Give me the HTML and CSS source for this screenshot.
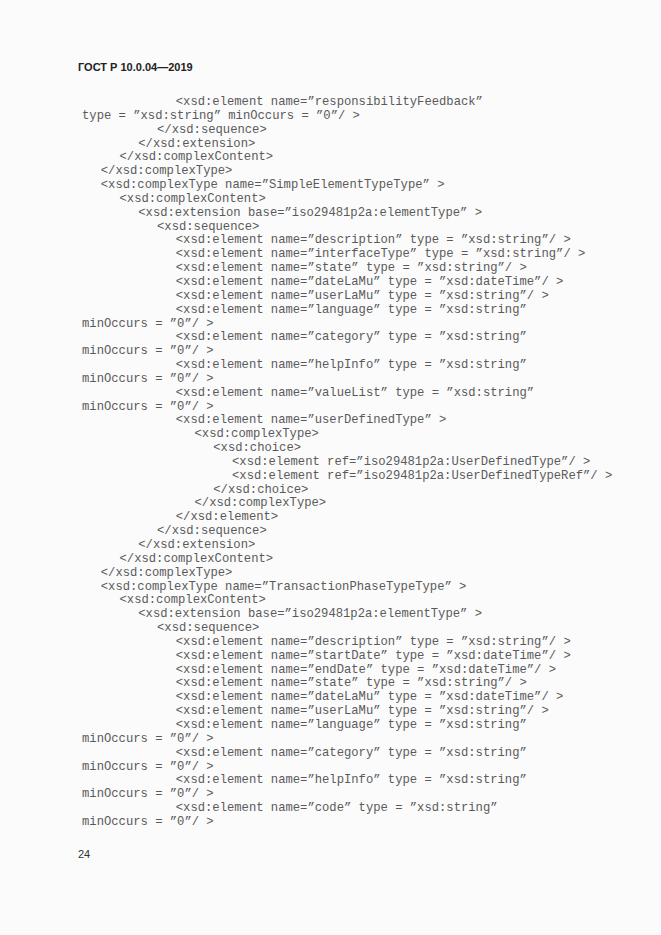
FILE: index.html
```html
<!DOCTYPE html>
<html lang="ru">
<head>
<meta charset="utf-8">
<title>ГОСТ Р 10.0.04—2019</title>
<link rel="stylesheet" href="styles.css">
</head>
<body>
<div class="page">
  <header class="running-head">ГОСТ Р 10.0.04—2019</header>
  <div class="code">
    <div class="ln l5">&lt;xsd:element name=”responsibilityFeedback”</div>
    <div class="ln l0">type = ”xsd:string” minOccurs = ”0”/ &gt;</div>
    <div class="ln l4">&lt;/xsd:sequence&gt;</div>
    <div class="ln l3">&lt;/xsd:extension&gt;</div>
    <div class="ln l2">&lt;/xsd:complexContent&gt;</div>
    <div class="ln l1">&lt;/xsd:complexType&gt;</div>
    <div class="ln l1">&lt;xsd:complexType name=”SimpleElementTypeType” &gt;</div>
    <div class="ln l2">&lt;xsd:complexContent&gt;</div>
    <div class="ln l3">&lt;xsd:extension base=”iso29481p2a:elementType” &gt;</div>
    <div class="ln l4">&lt;xsd:sequence&gt;</div>
    <div class="ln l5">&lt;xsd:element name=”description” type = ”xsd:string”/ &gt;</div>
    <div class="ln l5">&lt;xsd:element name=”interfaceType” type = ”xsd:string”/ &gt;</div>
    <div class="ln l5">&lt;xsd:element name=”state” type = ”xsd:string”/ &gt;</div>
    <div class="ln l5">&lt;xsd:element name=”dateLaMu” type = ”xsd:dateTime”/ &gt;</div>
    <div class="ln l5">&lt;xsd:element name=”userLaMu” type = ”xsd:string”/ &gt;</div>
    <div class="ln l5">&lt;xsd:element name=”language” type = ”xsd:string”</div>
    <div class="ln l0">minOccurs = ”0”/ &gt;</div>
    <div class="ln l5">&lt;xsd:element name=”category” type = ”xsd:string”</div>
    <div class="ln l0">minOccurs = ”0”/ &gt;</div>
    <div class="ln l5">&lt;xsd:element name=”helpInfo” type = ”xsd:string”</div>
    <div class="ln l0">minOccurs = ”0”/ &gt;</div>
    <div class="ln l5">&lt;xsd:element name=”valueList” type = ”xsd:string”</div>
    <div class="ln l0">minOccurs = ”0”/ &gt;</div>
    <div class="ln l5">&lt;xsd:element name=”userDefinedType” &gt;</div>
    <div class="ln l6">&lt;xsd:complexType&gt;</div>
    <div class="ln l7">&lt;xsd:choice&gt;</div>
    <div class="ln l8">&lt;xsd:element ref=”iso29481p2a:UserDefinedType”/ &gt;</div>
    <div class="ln l8">&lt;xsd:element ref=”iso29481p2a:UserDefinedTypeRef”/ &gt;</div>
    <div class="ln l7">&lt;/xsd:choice&gt;</div>
    <div class="ln l6">&lt;/xsd:complexType&gt;</div>
    <div class="ln l5">&lt;/xsd:element&gt;</div>
    <div class="ln l4">&lt;/xsd:sequence&gt;</div>
    <div class="ln l3">&lt;/xsd:extension&gt;</div>
    <div class="ln l2">&lt;/xsd:complexContent&gt;</div>
    <div class="ln l1">&lt;/xsd:complexType&gt;</div>
    <div class="ln l1">&lt;xsd:complexType name=”TransactionPhaseTypeType” &gt;</div>
    <div class="ln l2">&lt;xsd:complexContent&gt;</div>
    <div class="ln l3">&lt;xsd:extension base=”iso29481p2a:elementType” &gt;</div>
    <div class="ln l4">&lt;xsd:sequence&gt;</div>
    <div class="ln l5">&lt;xsd:element name=”description” type = ”xsd:string”/ &gt;</div>
    <div class="ln l5">&lt;xsd:element name=”startDate” type = ”xsd:dateTime”/ &gt;</div>
    <div class="ln l5">&lt;xsd:element name=”endDate” type = ”xsd:dateTime”/ &gt;</div>
    <div class="ln l5">&lt;xsd:element name=”state” type = ”xsd:string”/ &gt;</div>
    <div class="ln l5">&lt;xsd:element name=”dateLaMu” type = ”xsd:dateTime”/ &gt;</div>
    <div class="ln l5">&lt;xsd:element name=”userLaMu” type = ”xsd:string”/ &gt;</div>
    <div class="ln l5">&lt;xsd:element name=”language” type = ”xsd:string”</div>
    <div class="ln l0">minOccurs = ”0”/ &gt;</div>
    <div class="ln l5">&lt;xsd:element name=”category” type = ”xsd:string”</div>
    <div class="ln l0">minOccurs = ”0”/ &gt;</div>
    <div class="ln l5">&lt;xsd:element name=”helpInfo” type = ”xsd:string”</div>
    <div class="ln l0">minOccurs = ”0”/ &gt;</div>
    <div class="ln l5">&lt;xsd:element name=”code” type = ”xsd:string”</div>
    <div class="ln l0">minOccurs = ”0”/ &gt;</div>
  </div>
  <footer class="page-number">24</footer>
</div>
</body>
</html>
```
FILE: styles.css
```css
html, body {
  margin: 0;
  padding: 0;
  background: #fbfbfb;
}

.page {
  width: 661px;
  height: 935px;
  box-sizing: border-box;
  padding: 61px 0 0 78px;
  display: flex;
  flex-direction: column;
}

.running-head {
  font-family: "Liberation Sans", Arial, sans-serif;
  font-weight: bold;
  font-size: 11px;
  line-height: 13px;
  color: #222;
}

.code {
  margin-top: 22px;
  padding-left: 4px;
  font-family: "Liberation Mono", "Courier New", monospace;
  font-size: 12.2px;
  line-height: 13.85px;
  color: #5a5a5a;
}

.ln {
  white-space: pre;
}

.l0 { padding-left: 0; }
.l1 { padding-left: 18.75px; }
.l2 { padding-left: 37.5px; }
.l3 { padding-left: 56.25px; }
.l4 { padding-left: 75px; }
.l5 { padding-left: 93.75px; }
.l6 { padding-left: 112.5px; }
.l7 { padding-left: 131.25px; }
.l8 { padding-left: 150px; }

.page-number {
  margin-top: 18px;
  font-family: "Liberation Sans", Arial, sans-serif;
  font-size: 11px;
  line-height: 13px;
  color: #333;
}
```
